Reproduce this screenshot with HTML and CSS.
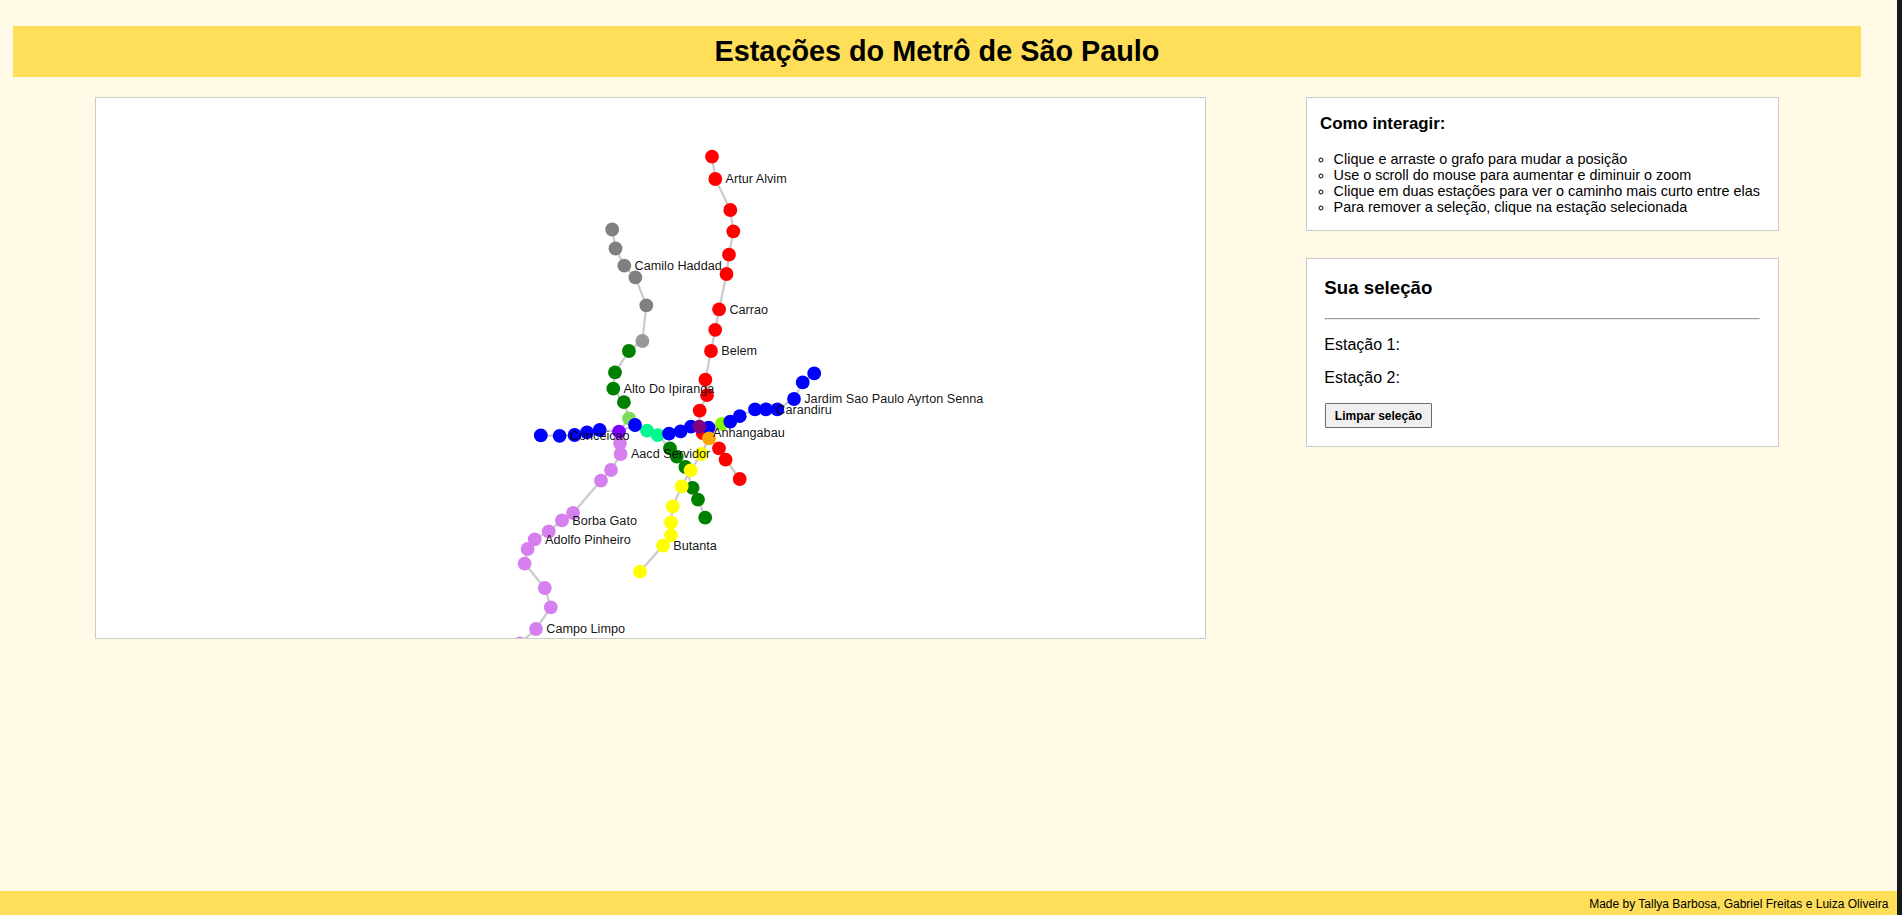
FILE: index.html
```html
<!DOCTYPE html>
<html lang="pt-BR">
<head>
<meta charset="utf-8">
<title>Estações do Metrô de São Paulo</title>
<link rel="stylesheet" href="styles.css">
</head>
<body>
<div class="page">
  <h1 class="title">Estações do Metrô de São Paulo</h1>
  <main class="content">
    <svg class="graph" id="graph" viewBox="96 98 1109 540"></svg>
    <aside class="side">
      <section class="help">
        <h3>Como interagir:</h3>
        <ul>
          <li>Clique e arraste o grafo para mudar a posição</li>
          <li>Use o scroll do mouse para aumentar e diminuir o zoom</li>
          <li>Clique em duas estações para ver o caminho mais curto entre elas</li>
          <li>Para remover a seleção, clique na estação selecionada</li>
        </ul>
      </section>
      <section class="selection">
        <h3>Sua seleção</h3>
        <hr>
        <p>Estação 1:</p>
        <p>Estação 2:</p>
        <button class="clear" type="button">Limpar seleção</button>
      </section>
    </aside>
  </main>
  <footer class="footer">Made by Tallya Barbosa, Gabriel Freitas e Luiza Oliveira</footer>
</div>
<script src="graph.js"></script>
</body>
</html>
```
FILE: styles.css
```css
* { box-sizing: border-box; }
body {
  margin: 0;
  height: 915px;
  overflow: hidden;
  background: #17181a;
  color: #000;
  font-family: "Liberation Sans", Arial, sans-serif;
}
.page {
  display: flex;
  flex-direction: column;
  width: 1897px;
  height: 915px;
  padding-top: 26px;
  background: #fff9e5;
}
.title {
  margin: 0 36px 0 13px;
  padding: 9px 0;
  background: #ffde59;
  font-size: 28.8px;
  line-height: 33px;
  text-align: center;
}
.content {
  display: flex;
  align-items: flex-start;
  gap: 100px;
  flex: 1;
  padding: 20px 0 0 95px;
}
.graph {
  display: block;
  width: 1111px;
  height: 542px;
  border: 1px solid #ccc;
  background: #fff;
  overflow: hidden;
}
.edge { fill: none; stroke: #ccc; stroke-width: 2.3; }
.label { fill: #000; fill-opacity: .93; font-size: 12.65px; }
.side {
  display: flex;
  flex-direction: column;
  gap: 27px;
  width: 473px;
}
.help, .selection { border: 1px solid #ccc; background: #fff; }
.help { height: 134px; padding: 16px 13px 15px; }
.help h3 { margin: 0 0 18px; font-size: 16.85px; line-height: 19px; }
.help ul {
  margin: 0;
  padding-left: 13.6px;
  list-style: circle;
  font-size: 14.4px;
  line-height: 16px;
  white-space: nowrap;
}
.selection { height: 189px; padding: 18px; }
.selection h3 { margin: 0 0 0 -0.7px; font-size: 18.72px; line-height: 21px; }
.selection hr { margin: 20px 0 16px; }
.selection p { margin: 0 0 15px -0.7px; font-size: 16px; line-height: 18px; }
.clear {
  display: block;
  width: 107px;
  height: 25px;
  margin-top: 16px;
  padding: 0;
  border: 1px solid #6b6b6b;
  border-radius: 1px;
  background: #efefef;
  color: #000;
  font: bold 12px "Liberation Sans", Arial, sans-serif;
}
.footer {
  height: 24px;
  padding: 6px 8.6px 0 0;
  background: #ffde59;
  font-size: 12px;
  line-height: 14px;
  text-align: right;
}
```
FILE: graph.js
```js
const NS = "http://www.w3.org/2000/svg";
const graph = document.getElementById("graph");

const edges = [
  // red line
  [[712,156.7],[715.3,179],[730.3,210],[733.3,231.3],[729,254.7],[726.5,274],[719.1,309.4],[715.2,329.8],[711,351],[705.4,379.7],[707,395.2],[699.7,410.6],[699.3,426.6],[702.7,433],[709,438.4],[719,448.3],[725.6,459.7],[739.7,479]],
  // silver and green lines
  [[612.2,229.5],[615.5,248.5],[624.3,265.6],[635.4,277.3],[646.3,305.4],[642.4,341],[628.9,351],[615,372.4],[613.3,388.6],[623.9,402.2],[629,418.4],[647,430.6],[657.7,435.2],[670,448.3],[676.8,456.6],[685.4,467],[692.6,487.8],[698,499.6],[705.2,517.6]],
  // blue line
  [[540.8,435.4],[559.6,435.8],[574.6,435],[587,432.4],[599.7,430],[619,431.6],[635,425],[647,430.6],[657.7,435.2],[669,433.6],[680.6,431.3],[691,426.6],[699.3,426.6],[708.6,427.6],[721.8,423.8],[730.3,421.6],[739.7,416.2],[755,409.4],[766,409.4],[777.3,409.4],[794,399],[802.7,382.4],[814.2,373.4]],
  // yellow line
  [[721.8,423.8],[709,438.4],[701.3,454],[690.6,470.3],[681.7,486.3],[672.7,506.4],[671,522.3],[671,535.3],[663,545.6],[640,571.6]],
  // lilac line
  [[629,418.4],[619,431.6],[620,443],[620.6,454],[611,470],[601,480.6],[573,513],[562,520.4],[548.7,531.3],[534.7,539.3],[527.6,549],[524.6,563.6],[544.8,588],[550.8,607.3],[536,629],[519.7,643.4]]
];

const nodes = [
  ["#808080", [[612.2,229.5],[615.5,248.5],[624.3,265.6],[635.4,277.3],[646.3,305.4]]],
  ["#999999", [[642.4,341]]],
  ["#008000", [[628.9,351],[615,372.4],[613.3,388.6],[623.9,402.2],[670,448.3],[676.8,456.6],[685.4,467],[692.6,487.8],[698,499.6],[705.2,517.6]]],
  ["#7edc5a", [[629,418.4]]],
  ["#00fa90", [[647,430.6],[657.7,435.2]]],
  ["#ff0000", [[712,156.7],[715.3,179],[730.3,210],[733.3,231.3],[729,254.7],[726.5,274],[719.1,309.4],[715.2,329.8],[711,351],[705.4,379.7],[707,395.2],[699.7,410.6],[702.7,433],[719,448.3],[725.6,459.7],[739.7,479]]],
  ["#84fa00", [[721.8,423.8]]],
  ["#0000ff", [[540.8,435.4],[559.6,435.8],[574.6,435],[587,432.4],[599.7,430],[635,425],[669,433.6],[680.6,431.3],[691,426.6],[708.6,427.6],[730.3,421.6],[739.7,416.2],[755,409.4],[766,409.4],[777.3,409.4],[794,399],[802.7,382.4],[814.2,373.4]]],
  ["#ffff00", [[701.3,454],[690.6,470.3],[681.7,486.3],[672.7,506.4],[671,522.3],[671,535.3],[663,545.6],[640,571.6]]],
  ["#ffa500", [[709,438.4]]],
  ["#800080", [[699.3,426.6]]],
  ["#d580ee", [[620,443],[620.6,454],[611,470],[601,480.6],[573,513],[562,520.4],[548.7,531.3],[534.7,539.3],[527.6,549],[524.6,563.6],[544.8,588],[550.8,607.3],[536,629],[519.7,643.4]]],
  ["#8000ff", [[619,431.6]]]
];

const labels = [
  ["Artur Alvim", 715.3, 179],
  ["Camilo Haddad", 624.3, 265.6],
  ["Carrao", 719.1, 309.4],
  ["Belem", 711, 351],
  ["Alto Do Ipiranga", 613.3, 388.6],
  ["Jardim Sao Paulo Ayrton Senna", 794, 399],
  ["Carandiru", 766, 409.4],
  ["Anhangabau", 702.7, 433],
  ["Conceicao", 559.6, 435.8],
  ["Aacd Servidor", 620.6, 454],
  ["Borba Gato", 562, 520.4],
  ["Adolfo Pinheiro", 534.7, 539.3],
  ["Butanta", 663, 545.6],
  ["Campo Limpo", 536, 629]
];

function add(tag, attrs, text) {
  const el = document.createElementNS(NS, tag);
  for (const key in attrs) el.setAttribute(key, attrs[key]);
  if (text) el.textContent = text;
  graph.appendChild(el);
}

edges.forEach(points => add("polyline", { class: "edge", points: points.join(" ") }));
nodes.forEach(([color, points]) =>
  points.forEach(([x, y]) => add("circle", { cx: x, cy: y, r: 6.9, fill: color })));
labels.forEach(([name, x, y]) => add("text", { class: "label", x: x + 10.3, y: y + 4.4 }, name));
```
